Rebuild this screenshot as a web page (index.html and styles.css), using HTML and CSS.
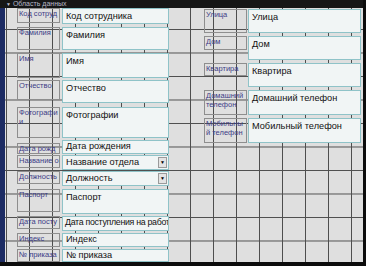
FILE: index.html
```html
<!DOCTYPE html>
<html lang="ru">
  <head>
    <meta charset="UTF-8" />
    <title>Область данных</title>
    <link rel="stylesheet" href="styles.css">
  </head>
  <body>
    <div class="frame">
      <div class="section-bar"><span class="arrow">▼</span> Область данных</div>
      <div class="body">
        <div class="strip"></div>
        <div class="canvas">
          <div class="col col-left">
            <div class="row r1"><div class="lbl l15">Код сотруд</div><div class="box">Код сотрудника</div></div>
            <div class="row r2"><div class="lbl l23">Фамилия</div><div class="box">Фамилия</div></div>
            <div class="row r3"><div class="lbl l25">Имя</div><div class="box">Имя</div></div>
            <div class="row r4"><div class="lbl l20">Отчество</div><div class="box">Отчество</div></div>
            <div class="row r5"><div class="lbl l31 wrap">Фотографи и</div><div class="box">Фотографии</div></div>
            <div class="row r6 short"><div class="lbl l11 shift3">Дата рожд</div><div class="box">Дата рождения</div></div>
            <div class="row r7 short"><div class="lbl l13">Название о</div><div class="box combo"><span>Название отдела</span><span class="drop">▼</span></div></div>
            <div class="row r8 short"><div class="lbl l13">Должность</div><div class="box combo"><span>Должность</span><span class="drop">▼</span></div></div>
            <div class="row r9"><div class="lbl l23">Паспорт</div><div class="box">Паспорт</div></div>
            <div class="row r10 short"><div class="lbl l13">Дата посту</div><div class="box tight">Дата поступления на работ</div></div>
            <div class="row r11 short"><div class="lbl l14">Индекс</div><div class="box">Индекс</div></div>
            <div class="row r12 short"><div class="lbl l13">№ приказа</div><div class="box">№ приказа</div></div>
          </div>
          <div class="col col-right">
            <div class="row q1"><div class="lbl l24">Улица</div><div class="box">Улица</div></div>
            <div class="row q2"><div class="lbl l14">Дом</div><div class="box">Дом</div></div>
            <div class="row q3"><div class="lbl l13">Квартира</div><div class="box">Квартира</div></div>
            <div class="row q4"><div class="lbl l25 wrap">Домашний телефон</div><div class="box">Домашний телефон</div></div>
            <div class="row q5"><div class="lbl l25 wrap">Мобильны й телефон</div><div class="box">Мобильный телефон</div></div>
          </div>
        </div>
      </div>
      <div class="bottom"></div>
    </div>
  </body>
</html>
```

FILE: styles.css
```css
body {
  margin: 0;
  background-color: #0c0c0c;
  font-family: "Liberation Sans", Arial, sans-serif;
}

.frame {
  width: 363px;
  height: 266px;
  display: flex;
  flex-direction: column;
  overflow: hidden;
}

.section-bar {
  height: 8px;
  background-color: #161616;
  color: #b8b8c8;
  font-size: 7px;
  line-height: 7px;
  padding-left: 6px;
  overflow: hidden;
  white-space: nowrap;
}

.arrow {
  font-size: 5px;
}

.body {
  flex: 1;
  display: flex;
  min-height: 0;
}

.strip {
  width: 5px;
  background-color: #1c2b63;
}

.canvas {
  flex: 1;
  display: flex;
  gap: 35px;
  padding-left: 12px;
  background-color: #dfdfdf;
  background-image:
    linear-gradient(to right, #4e4e4e 1px, transparent 1px),
    linear-gradient(to bottom, #4e4e4e 1px, transparent 1px);
  background-size: 23px 100%, 100% 23.5px;
  background-position: 1px 0, 0 21px;
  overflow: hidden;
}

.bottom {
  height: 4px;
  background-color: #0c0c0c;
}

.col {
  display: flex;
  flex-direction: column;
}

.col-left {
  width: 152px;
}

.col-right {
  width: 157px;
}

.row {
  display: flex;
  align-items: flex-start;
  gap: 2px;
  flex-shrink: 0;
}

.col-right .row {
  gap: 1px;
}

.lbl {
  width: 40px;
  flex-shrink: 0;
  border: 1px solid #8e8e8e;
  color: #3c3c86;
  font-size: 7.5px;
  line-height: 9px;
  padding-left: 1px;
  white-space: nowrap;
  overflow: hidden;
}

.lbl.wrap {
  white-space: normal;
}

.box {
  flex: 1;
  height: 100%;
  box-sizing: border-box;
  background-color: #f1f5f5;
  border: 1px solid #8fc3c8;
  color: #111;
  font-size: 9.2px;
  line-height: 12px;
  padding: 1px 3px 0;
  white-space: nowrap;
  overflow: hidden;
}

.short .box {
  padding-top: 0;
  line-height: 11px;
}

.box.tight {
  padding-left: 2px;
  padding-right: 0;
  font-size: 8.8px;
  letter-spacing: -0.3px;
}

.combo {
  display: flex;
  justify-content: space-between;
  align-items: center;
  padding-right: 1px;
}

.drop {
  width: 7px;
  height: 9px;
  background-color: #e4e4e4;
  border: 1px solid #9a9a9a;
  font-size: 5px;
  line-height: 9px;
  text-align: center;
  color: #000;
}

.shift3 {
  margin-top: 3px;
}

.l11 { height: 9px; }
.l13 { height: 11px; }
.l14 { height: 12px; }
.l15 { height: 13px; }
.l20 { height: 18px; }
.l23 { height: 21px; }
.l24 { height: 22px; }
.l25 { height: 23px; }
.l31 { height: 29px; }

.r1 { height: 16px; }
.r2 { height: 23px; margin-top: 3px; }
.r3 { height: 25px; margin-top: 3px; }
.r4 { height: 23px; margin-top: 2px; }
.r5 { height: 31px; margin-top: 4px; }
.r6 { height: 14px; margin-top: 2px; }
.r7 { height: 15px; margin-top: 1px; }
.r8 { height: 15px; margin-top: 1px; }
.r9 { height: 25px; margin-top: 3px; }
.r10 { height: 15px; margin-top: 2px; }
.r11 { height: 14px; margin-top: 2px; }
.r12 { height: 13px; margin-top: 2px; }

.q1 { height: 24px; margin-top: 1px; }
.q2 { height: 24px; margin-top: 3px; }
.q3 { height: 24px; margin-top: 3px; }
.q4 { height: 25px; margin-top: 3px; }
.q5 { height: 25px; margin-top: 3px; }
```
